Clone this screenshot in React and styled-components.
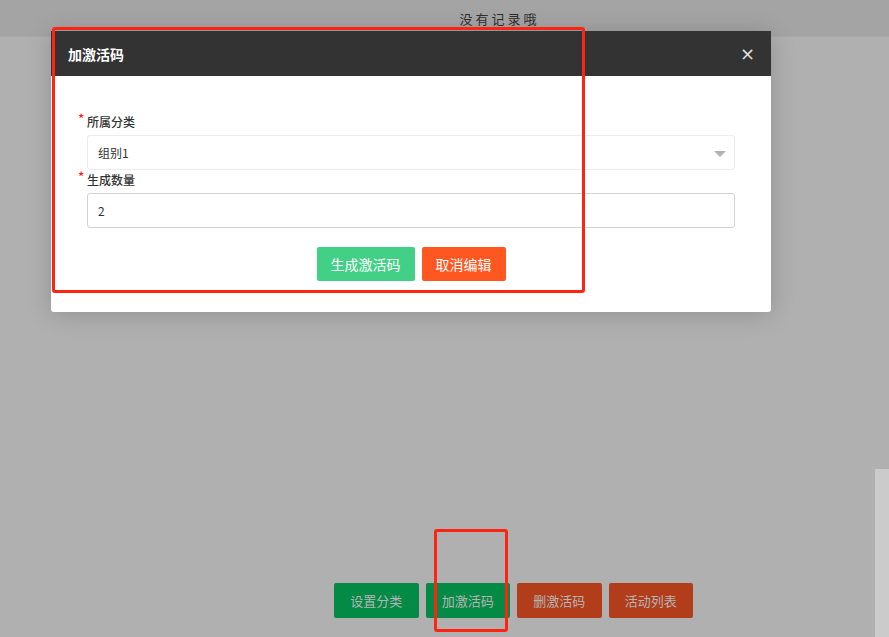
import React from 'react';
import styled, { createGlobalStyle } from 'styled-components';

const GlobalStyle = createGlobalStyle`
  html, body {
    margin: 0;
    padding: 0;
    background: #b0b0b0;
    font-family: "Noto Sans CJK SC", "Noto Sans", sans-serif;
  }
`;

export default function App() {
  return (
    <>
      <GlobalStyle />
      <Page>
        <TopBar>没有记录哦</TopBar>
        <Content />
        <ButtonBar>
          <PageBtn $tone="green">设置分类</PageBtn>
          <PageBtn $tone="green">加激活码</PageBtn>
          <PageBtn $tone="red">删激活码</PageBtn>
          <PageBtn $tone="red">活动列表</PageBtn>
        </ButtonBar>

        <Scrollbar />

        <Modal>
          <ModalHeader>
            <ModalTitle>加激活码</ModalTitle>
            <Close>×</Close>
          </ModalHeader>
          <ModalBody>
            <Label>所属分类</Label>
            <Select>
              组别1
              <Caret />
            </Select>
            <Label>生成数量</Label>
            <Input>2</Input>
            <Actions>
              <ActionBtn $tone="green">生成激活码</ActionBtn>
              <ActionBtn $tone="orange">取消编辑</ActionBtn>
            </Actions>
          </ModalBody>
        </Modal>

        <Mark $left={52} $top={27} $width={533} $height={266} />
        <Mark $left={434} $top={529} $width={74} $height={103} />
      </Page>
    </>
  );
}

const Page = styled.div`
  position: relative;
  display: flex;
  flex-direction: column;
  height: 637px;
  overflow: hidden;
  background: #b0b0b0;
`;

const TopBar = styled.div`
  display: flex;
  align-items: center;
  justify-content: center;
  height: 36px;
  padding-left: 110px;
  background: #a4a4a4;
  border-bottom: 1px solid #a9a9a9;
  color: #2e2e2e;
  font-size: 13px;
  letter-spacing: 3px;
`;

const Content = styled.div`
  flex: 1;
`;

const ButtonBar = styled.div`
  display: flex;
  gap: 7px;
  padding: 0 0 19px 334px;
`;

const PageBtn = styled.button`
  width: 84.5px;
  height: 35px;
  border: none;
  border-radius: 2px;
  background: ${(p) => (p.$tone === 'green' ? '#038a45' : '#b23d1b')};
  color: #b5b5b5;
  font-family: inherit;
  font-size: 13px;
  padding: 0;
`;

const Scrollbar = styled.div`
  position: absolute;
  right: 0;
  top: 469px;
  bottom: 0;
  width: 14px;
  background: #cbcbcb;
`;

const Modal = styled.div`
  position: absolute;
  left: 51px;
  top: 31px;
  width: 720px;
  background: #fff;
  border-radius: 0 0 3px 3px;
  box-shadow: 0 2px 24px rgba(0, 0, 0, 0.18);
`;

const ModalHeader = styled.div`
  display: flex;
  align-items: center;
  justify-content: space-between;
  height: 45px;
  padding: 0 16px 0 17px;
  background: #333333;
`;

const ModalTitle = styled.div`
  color: #fff;
  font-size: 14px;
  font-weight: 700;
`;

const Close = styled.span`
  color: #e0e0e0;
  font-family: "DejaVu Sans", sans-serif;
  font-size: 18px;
  line-height: 1;
`;

const ModalBody = styled.div`
  display: flex;
  flex-direction: column;
  padding: 38px 36px 31px;
`;

const Label = styled.div`
  position: relative;
  height: 16px;
  margin-bottom: 5px;
  color: #333;
  font-size: 12px;
  line-height: 16px;
  font-weight: 500;

  &::before {
    content: '*';
    position: absolute;
    left: -9px;
    top: -3px;
    color: #ff1a1a;
    font-size: 13px;
  }
`;

const Field = styled.div`
  position: relative;
  display: flex;
  align-items: center;
  box-sizing: border-box;
  height: 35px;
  padding-left: 10px;
  border-radius: 3px;
  color: #333;
  font-size: 12px;
`;

const Select = styled(Field)`
  border: 1px solid #ebebf0;
  margin-bottom: 2px;
`;

const Caret = styled.span`
  position: absolute;
  right: 8px;
  top: 15px;
  width: 0;
  height: 0;
  border-left: 6px solid transparent;
  border-right: 6px solid transparent;
  border-top: 6px solid #b4b4b4;
`;

const Input = styled(Field)`
  border: 1px solid #d2d2d2;
`;

const Actions = styled.div`
  display: flex;
  justify-content: center;
  gap: 7px;
  margin-top: 19px;
`;

const ActionBtn = styled.button`
  height: 34px;
  padding: 0 14px;
  border: none;
  border-radius: 2px;
  background: ${(p) => (p.$tone === 'green' ? '#42d086' : '#ff5722')};
  color: #fff;
  font-family: inherit;
  font-size: 14px;
`;

const Mark = styled.div`
  position: absolute;
  left: ${(p) => p.$left}px;
  top: ${(p) => p.$top}px;
  width: ${(p) => p.$width}px;
  height: ${(p) => p.$height}px;
  box-sizing: border-box;
  border: 3px solid #ff2314;
  border-radius: 3px;
  pointer-events: none;
`;
